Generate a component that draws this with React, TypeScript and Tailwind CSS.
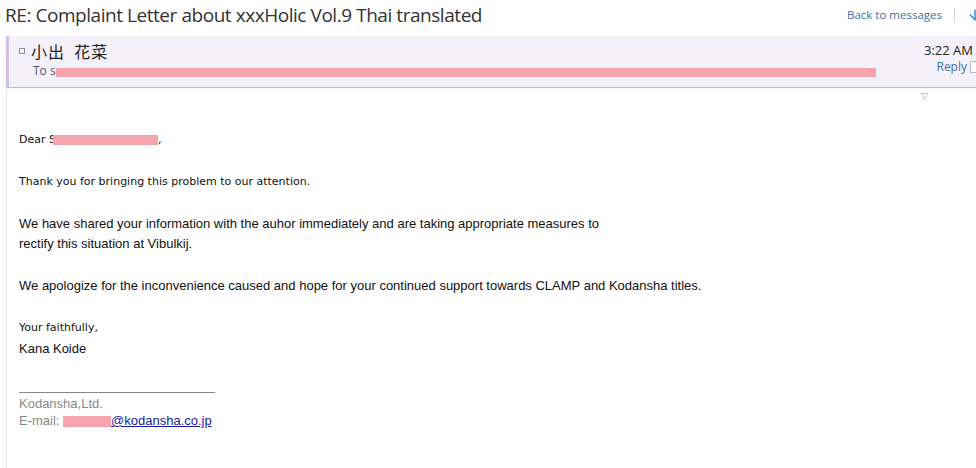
import { ArrowDown } from "lucide-react"

const tahoma = "font-['DejaVu_Sans',sans-serif]"

export default function App() {
  return (
    <div className="w-[976px] h-[468px] overflow-hidden bg-white font-['Liberation_Sans',Arial,sans-serif]">
      {/* top bar */}
      <div className="flex items-start h-[36px]">
        <h1 className="pl-[5px] pt-[2px] text-[19px] leading-[26px] text-[#333] font-['Open_Sans',sans-serif] tracking-[-0.45px]">
          RE: Complaint Letter about xxxHolic Vol.9 Thai translated
        </h1>
        <div className="ml-auto flex items-center pt-[6px] text-[11.5px] font-['Open_Sans',sans-serif]">
          <span className="text-[#3a72a8]">Back to messages</span>
          <span className="ml-[12px] h-[14px] w-px bg-[#d0d0d0]" />
          <ArrowDown className="ml-[12px] -mr-[7px] h-4 w-4 text-[#4a90d9]" strokeWidth={2.5} />
        </div>
      </div>

      {/* message header */}
      <div className="ml-[6px] flex h-[51px] border-l-[3px] border-[#cfc1e8] bg-[#f5f1fb] shadow-[0_1px_1px_rgba(0,0,0,0.25)]">
        <div className="flex flex-1 flex-col pl-[10px] pt-[5px]">
          <div className="flex items-center">
            <span className="h-[6px] w-[6px] border border-[#8a8a9a] bg-white" />
            <span className="ml-[6px] text-[16px] leading-[20px] text-[#222] font-['Noto_Sans_CJK_JP',sans-serif] tracking-[1px]">
              小出&nbsp;&nbsp;花菜
            </span>
          </div>
          <div className="ml-[14px] mt-[2px] flex items-center text-[12px] leading-[16px] text-[#555] font-['Open_Sans',sans-serif]">
            <span className="whitespace-nowrap">To s</span>
            <span className="mt-[2px] h-[9px] w-[820px] bg-[#f7a3ad]" />
          </div>
        </div>
        <div className="flex flex-col items-end pt-[6px] font-['Open_Sans',sans-serif]">
          <span className="pr-[3px] text-[13px] leading-[17px] text-[#222]">3:22 AM</span>
          <div className="-mr-[2px] flex items-center">
            <span className="text-[12px] leading-[16px] text-[#3a72a8]">Reply</span>
            <span className="ml-[3px] h-[12px] w-[8px] border border-[#bbb] bg-white" />
          </div>
        </div>
      </div>

      {/* body */}
      <div className="ml-[6px] h-[381px] border-l border-[#ececec] pl-[12px]">
        <div className="flex justify-end pr-[48px] pt-[4px] text-[9px] leading-[10px] text-[#999]">▽</div>
        <div className={`${tahoma} pt-[32px] text-[11px] leading-[14px] text-[#111]`}>
          Dear S<span className="inline-block h-[10px] w-[105px] bg-[#f7a3ad] align-middle -ml-[3px]" />,
        </div>
        <div className={`${tahoma} mt-[28px] text-[11px] leading-[14px] text-[#111]`}>
          Thank you for bringing this problem to our attention.
        </div>
        <div className="mt-[25px] text-[13px] leading-[20px] text-[#111]">
          We have shared your information with the auhor immediately and are taking appropriate measures to
          <br />
          rectify this situation at Vibulkij.
        </div>
        <div className="mt-[21px] text-[13px] leading-[21px] text-[#111]">
          We apologize for the inconvenience caused and hope for your continued support towards CLAMP and Kodansha titles.
        </div>
        <div className={`${tahoma} mt-[25px] text-[11px] leading-[14px] text-[#111]`}>Your faithfully,</div>
        <div className="mt-[5px] text-[13px] leading-[18px] text-[#111]">Kana Koide</div>
        <div className="mt-[34px] h-px w-[196px] bg-[#888]" />
        <div className="mt-[2px] text-[13px] leading-[17px] text-[#888]">Kodansha,Ltd.</div>
        <div className="text-[13px] leading-[17px] text-[#888]">
          E-mail:{" "}
          <span className="text-[#1a1aa6] underline">
            <span className="inline-block h-[11px] w-[48px] bg-[#f7a3ad] align-middle" />@kodansha.co.jp
          </span>
        </div>
      </div>
    </div>
  )
}
